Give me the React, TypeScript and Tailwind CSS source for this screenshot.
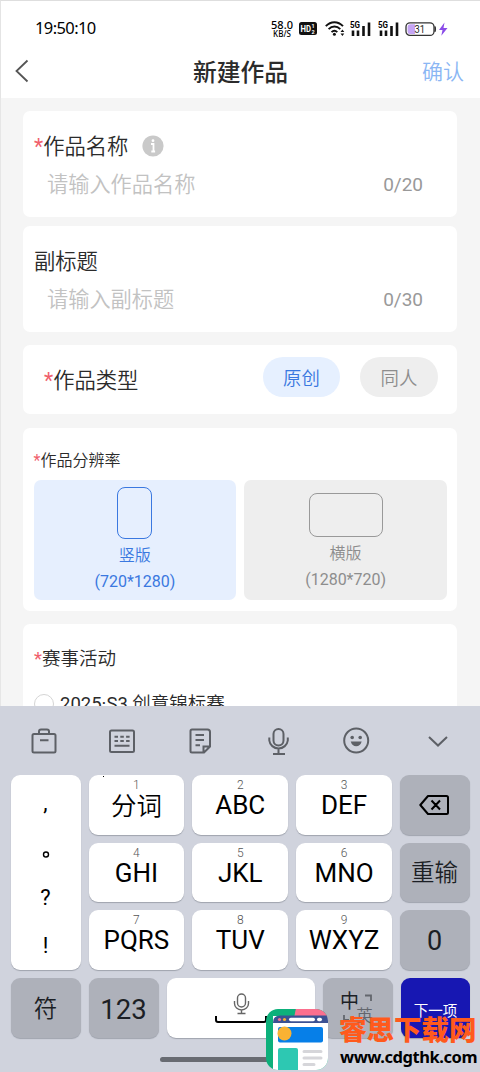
import React from 'react';

const letterKeys = [
  { num: '1', label: '分词' },
  { num: '2', label: 'ABC' },
  { num: '3', label: 'DEF' },
  { num: '4', label: 'GHI' },
  { num: '5', label: 'JKL' },
  { num: '6', label: 'MNO' },
  { num: '7', label: 'PQRS' },
  { num: '8', label: 'TUV' },
  { num: '9', label: 'WXYZ' },
];

const Signal: React.FC = () => (
  <svg width="22" height="18" viewBox="0 0 22 18" className="shrink-0">
    <text x="0" y="7.5" fontSize="8.5" fontWeight="700" fontFamily="Roboto, sans-serif" textLength="10" lengthAdjust="spacingAndGlyphs">5G</text>
    <path d="M3 10.5V16M8 10.5V16M13.5 6V16M19 2.5V16" stroke="#111" strokeWidth="2.6" />
  </svg>
);

const StatusBar: React.FC = () => (
  <div className="flex h-[46px] items-center pt-[9px] pl-[34px] text-black">
    <span className="w-[235px] font-['Noto_Sans',sans-serif] text-[16.5px] leading-none tracking-[-0.6px]">19:50:10</span>
    <div className="flex w-[24px] flex-col items-center font-['Noto_Sans',sans-serif] leading-none">
      <span className="text-[11px] leading-[10px] font-medium">58.0</span>
      <span className="text-[8px] leading-[8px] font-medium">KB/S</span>
    </div>
    <svg width="18" height="13" viewBox="0 0 18 13" className="ml-[5px] shrink-0">
      <rect width="18" height="13" rx="2.5" fill="#111" />
      <text x="1.5" y="10" fontSize="9.5" fontWeight="700" fill="#fff" fontFamily="Roboto, sans-serif" textLength="10.5" lengthAdjust="spacingAndGlyphs">HD</text>
      <text x="12.5" y="6" fontSize="5.5" fontWeight="700" fill="#fff" fontFamily="Roboto, sans-serif">1</text>
      <text x="12.5" y="11.5" fontSize="5.5" fontWeight="700" fill="#fff" fontFamily="Roboto, sans-serif">2</text>
    </svg>
    <svg width="20" height="17" viewBox="0 0 20 17" className="ml-[8px] shrink-0" fill="none" stroke="#111" strokeWidth="1.9">
      <path d="M.8 6.2C5.8 .9 13 .9 18 6.2" />
      <path d="M3.6 9.2c3.5-3.6 8.2-3.6 11.7 0" />
      <path d="M6.5 12.1c1.8-1.8 4-1.8 5.8 0" />
      <circle cx="9.4" cy="14.3" r="1.5" fill="#111" stroke="none" />
      <path d="M15.5 12l1.9-2.4 1.9 2.4zM15.5 13.6l1.9 2.4 1.9-2.4z" fill="#111" stroke="none" />
    </svg>
    <div className="ml-[5px] flex gap-[6px]">
      <Signal />
      <Signal />
    </div>
    <svg width="43" height="16" viewBox="0 0 43 16" className="ml-[5px] shrink-0">
      <rect x="1" y="1.8" width="28" height="12.6" rx="4" fill="#fff" stroke="#333" strokeWidth="1.3" />
      <path d="M5 3.2H10V13H5Q2.6 13 2.6 10.5V5.7Q2.6 3.2 5 3.2Z" fill="#c5a5f5" />
      <path d="M30 5.5Q31.3 8 30 10.7Z" fill="#333" stroke="#333" />
      <text x="9.5" y="11.8" fontSize="10.5" fill="#222" fontFamily="Roboto, sans-serif" textLength="10.5" lengthAdjust="spacingAndGlyphs">31</text>
      <path d="M39.500 1.500L34 9h3.500l-1.200 5.800L42.500 7h-4z" fill="#8a4be8" />
    </svg>
  </div>
);

const Star: React.FC = () => <span className="font-normal text-[#f0606c]">*</span>;

type FieldProps = { label: string; placeholder: string; count: string; required?: boolean };

const FieldCard: React.FC<FieldProps> = ({ label, placeholder, count, required }) => (
  <section className="h-[106px] rounded-[7px] bg-white pt-[22px] pl-[11px]">
    <div className="flex h-[28px] items-center text-[21.3px] text-[#2b2b2b]">
      {required && <Star />}
      {label}
      {required && (
        <svg width="22" height="22" viewBox="0 0 22 22" className="mt-[-2px] ml-[14px]">
          <circle cx="11" cy="11" r="10.6" fill="#c9c9c9" />
          <circle cx="11" cy="5.7" r="1.4" fill="#fff" />
          <path d="M9 9h2.5v7.5M9.300 16.500h3.800" stroke="#fff" strokeWidth="1.800" fill="none" />
        </svg>
      )}
    </div>
    <div className="mt-[10px] flex h-[28px] items-center justify-between pr-[34px] pl-[13px]">
      <span className="text-[21.2px] text-[#c2c2c2]">{placeholder}</span>
      <span className="text-[19px] font-normal text-[#999]">{count}</span>
    </div>
  </section>
);

const Toolbar: React.FC = () => (
  <div className="flex h-[69px] items-center pl-[30px] text-[#5d6066]">
    <svg width="28" height="28" viewBox="0 0 28 28" fill="none" stroke="currentColor" strokeWidth="2" className="shrink-0">
      <rect x="2.5" y="7" width="23" height="18.5" rx="1.5" />
      <path d="M9 7V4.500Q9 2.500 11 2.500h6Q19 2.500 19 4.500V7M10 13.300h8.500" />
    </svg>
    <svg width="28" height="28" viewBox="0 0 28 28" fill="none" stroke="currentColor" strokeWidth="2" className="ml-[50px] shrink-0">
      <rect x="2" y="3.500" width="24" height="21.500" rx="1.500" />
      <path d="M6.500 9.800h3.500m2.300 0h3.500m2.300 0h3.500M6.500 14h3.500m2.300 0h3.500m2.300 0h3.500M6.500 18.800h15" />
    </svg>
    <svg width="28" height="28" viewBox="0 0 28 28" fill="none" stroke="currentColor" strokeWidth="2" className="ml-[50px] shrink-0">
      <path d="M6 2.500h15.500Q24 2.500 24 5v14.500l-6 6H6Q4.500 25.500 4.500 24V4Q4.500 2.500 6 2.500ZM17.500 25v-5.500H24M9.500 8h8.500M9.500 13h8.500M9.500 18.200h4.500" />
    </svg>
    <svg width="28" height="28" viewBox="0 0 28 28" fill="none" stroke="currentColor" strokeWidth="2" className="ml-[51px] shrink-0">
      <rect x="8.500" y="2" width="10" height="16.500" rx="5" />
      <path d="M4.300 10.500v3a9.300 8.800 0 0 0 18.500 0v-3M13.500 22.300V27M8 27h12" />
    </svg>
    <svg width="28" height="28" viewBox="0 0 28 28" fill="none" stroke="currentColor" strokeWidth="2" className="ml-[49px] shrink-0">
      <circle cx="14.200" cy="13.500" r="12" />
      <circle cx="10.200" cy="10.500" r="1.800" fill="currentColor" stroke="none" />
      <circle cx="18.200" cy="10.500" r="1.800" fill="currentColor" stroke="none" />
      <path d="M8.700 14.500h11q-1.500 4.800-5.500 4.800t-5.500-4.800Z" fill="currentColor" stroke="none" />
    </svg>
    <svg width="28" height="28" viewBox="0 0 28 28" fill="none" stroke="currentColor" strokeWidth="2" className="ml-[54px] shrink-0">
      <path d="M5 10l9 8.500 9-8.500" />
    </svg>
  </div>
);

const Watermark: React.FC = () => (
  <div className="absolute top-[1008px] left-[265px] flex">
    <svg width="64" height="64" viewBox="0 0 64 64" className="shrink-0">
      <defs>
        <clipPath id="badge">
          <rect x="1" y="1" width="62" height="61" rx="12" />
        </clipPath>
      </defs>
      <g clipPath="url(#badge)">
        <rect width="64" height="64" fill="#0db07b" />
        <path d="M31 0h33v20H27Z" fill="#fb6f8e" />
        <rect x="8" y="8" width="56" height="56" fill="#fff" />
        <path d="M8 15q0-7.500 7-7.500h49V15Z" fill="#3b5193" />
        <circle cx="14.500" cy="11.500" r="1.600" fill="#fb6f8e" />
        <circle cx="19.500" cy="11.500" r="1.600" fill="#f9b233" />
        <rect x="24" y="9.700" width="26" height="3.600" rx="1.800" fill="#fff" />
        <rect x="52" y="9.700" width="5" height="3.600" rx="1.800" fill="#fff" />
        <rect x="13" y="19" width="45" height="15.500" rx="2" fill="#067fe8" />
        <circle cx="19.500" cy="25.500" r="7" fill="#f9b233" />
        <rect x="13" y="40" width="20" height="24" rx="2" fill="#2dc8b2" />
        <path d="M39 43.500h17M39 50h17M39 56.500h10" stroke="#d6d6da" strokeWidth="3" strokeLinecap="round" />
      </g>
    </svg>
    <div className="ml-[10px] whitespace-nowrap">
      <div className="mt-[6px] h-[33px] text-[27.500px] leading-[33px] font-black text-[#ff5a1c]">睿思下载网</div>
      <div className="pl-px font-['Noto_Sans',sans-serif] text-[16.500px] leading-[19px] font-bold tracking-[-0.450px] text-black">www.cdgthk.com</div>
    </div>
  </div>
);

const Keyboard: React.FC = () => (
  <div className="h-[366px] bg-[#d0d3dd] text-black">
    <Toolbar />
    <div className="flex h-[195px] gap-[8px] pl-[10.500px]">
      <div className="flex w-[70px] flex-col items-center rounded-[9px] bg-white text-[22px] shadow-[0_1px_1px_#9fa3ad]">
        <span className="h-[53px] pt-[11px]">,</span>
        <span className="mt-[12px] h-[30px]">
          <svg width="10" height="20" viewBox="0 0 10 20"><circle cx="5" cy="14.500" r="2.500" fill="none" stroke="#000" strokeWidth="1.400" /></svg>
        </span>
        <span className="mt-[11px] h-[34px] leading-[34px]">?</span>
        <span className="mt-[14px] h-[34px] leading-[34px]">!</span>
      </div>
      <div className="grid w-[303.500px] grid-cols-3 grid-rows-3 gap-x-[8px] gap-y-[8px]">
        {letterKeys.map(k => (
          <div key={k.num} className="flex flex-col items-center rounded-[9px] bg-white shadow-[0_1px_1px_#9fa3ad]">
            <span className="mt-[3px] h-[13px] text-[12px] leading-[14px] font-light text-[#555]">{k.num}</span>
            <span className={k.num === '1' ? 'pt-px text-[25.500px] leading-[28px] font-[350]' : 'text-[26px] leading-[28px]'}>{k.label}</span>
          </div>
        ))}
      </div>
      <div className="grid w-[70px] grid-rows-3 gap-y-[8px] text-[#1c1f25] *:flex *:items-center *:justify-center *:rounded-[9px] *:bg-[#aeb1ba] *:shadow-[0_1px_1px_#9fa3ad]">
        <div>
          <svg width="30" height="20" viewBox="0 0 30 20" fill="none" stroke="#000" strokeWidth="2" className="mr-[3px]">
            <path d="M9 1h18.500Q29 1 29 2.500v15Q29 19 27.500 19H9L1.300 10ZM12.500 5.500l8.500 9M21 5.500l-8.500 9" strokeLinejoin="round" />
          </svg>
        </div>
        <div className="pt-[3px] pr-px text-[23.500px] font-[350]">重输</div>
        <div className="pt-[3px] pr-px text-[27px]">0</div>
      </div>
    </div>
    <div className="mt-[8px] flex h-[60px] gap-[8px] pl-[10.500px] text-[#1c1f25]">
      <div className="flex w-[70px] items-center justify-center rounded-[9px] bg-[#aeb1ba] pt-[3px] text-[23.500px] font-[350] shadow-[0_1px_1px_#9fa3ad]">符</div>
      <div className="flex w-[70px] items-center justify-center rounded-[9px] bg-[#aeb1ba] pt-[3px] text-[27.500px] shadow-[0_1px_1px_#9fa3ad]">123</div>
      <div className="flex w-[148.500px] flex-col items-center rounded-[9px] bg-white pt-[14px] shadow-[0_1px_1px_#9fa3ad]">
        <svg width="54" height="34" viewBox="0 0 54 34" fill="none">
          <path d="M2 24v4q0 2 2 2h46q2 0 2-2v-4" stroke="#000" strokeWidth="2" />
          <rect x="23.500" y="2" width="8" height="13" rx="4" stroke="#666" strokeWidth="1.400" />
          <path d="M20.500 9v2.500a7 6.500 0 0 0 14 0V9M27.500 18v3.500M23.500 21.500h8" stroke="#666" strokeWidth="1.400" />
        </svg>
      </div>
      <div className="flex w-[70px] rounded-[9px] bg-[#aeb1ba] pl-[17px] shadow-[0_1px_1px_#9fa3ad]">
        <div className="w-[20px]">
          <div className="mt-[12px] text-[19px] leading-[24px] font-normal">中</div>
          <svg width="8" height="8" viewBox="0 0 8 8" className="ml-[2px] text-[#63666d]"><path d="M2 1v5h5" stroke="currentColor" strokeWidth="1.800" fill="none" /></svg>
        </div>
        <div className="flex flex-col text-[#63666d]">
          <svg width="14" height="9" viewBox="0 0 14 9" className="mt-[16px]"><path d="M5 1.500h6V7" stroke="currentColor" strokeWidth="1.800" fill="none" /></svg>
          <span className="-ml-[4px] text-[17px] leading-[26px] font-[350]">英</span>
        </div>
      </div>
      <div className="flex w-[69px] items-center justify-center rounded-[9px] bg-[#1717b2] pt-[7px] text-[14.500px] text-white shadow-[0_1px_1px_#9fa3ad]">下一项</div>
    </div>
    <div className="mx-auto mt-[19px] h-[5px] w-[160px] rounded-full bg-[#686b72]" />
  </div>
);

const App: React.FC = () => {
  return (
    <div className="relative flex h-[1072px] w-[480px] flex-col overflow-hidden bg-[#f5f5f5] font-['Roboto','Noto_Sans_CJK_SC',sans-serif]">
      <header className="h-[98px] shrink-0 border-t border-l border-t-[#dedede] border-l-[#e4e4e4] bg-white">
        <StatusBar />
        <div className="flex h-[50px] items-center justify-between pr-[16px] pl-[13px]">
          <svg width="54" height="24" viewBox="0 0 54 24" fill="none" stroke="#555" strokeWidth="1.800" className="mt-[-3px]">
            <path d="M13.500 1.500L2.500 12l11 10.500" />
          </svg>
          <h1 className="pt-[3px] pr-[9px] text-[23.800px] font-medium text-[#2b2b2b]">新建作品</h1>
          <span className="pt-[2px] text-[21px] font-[350] text-[#8ab6f4]">确认</span>
        </div>
      </header>

      <main className="h-[608px] shrink-0 overflow-hidden border-l border-[#e6e6e6] pt-[13px] pr-[23px] pl-[22px] font-[350]">
        <FieldCard label="作品名称" placeholder="请输入作品名称" count="0/20" required />
        <div className="h-[9px]" />
        <FieldCard label="副标题" placeholder="请输入副标题" count="0/30" />

        <section className="mt-[13px] flex h-[69px] items-start rounded-[7px] bg-white pt-[12px] pr-[19px] pl-[21px]">
          <span className="mr-auto pt-[10px] text-[21.300px] leading-[28px] text-[#2b2b2b]"><Star />作品类型</span>
          <button className="h-[40px] w-[77px] rounded-full bg-[#e6f0ff] pt-[3px] text-[18.400px] text-[#3a78e0]">原创</button>
          <button className="ml-[20px] h-[40px] w-[78px] rounded-full bg-[#eee] pt-[3px] text-[18.400px] text-[#8d8d8d]">同人</button>
        </section>

        <section className="mt-[14px] h-[183px] rounded-[7px] bg-white pt-[21px] pr-[10px] pl-[10.500px]">
          <div className="h-[31px] text-[16px] leading-[24px] text-[#2b2b2b]"><Star />作品分辨率</div>
          <div className="grid h-[120px] grid-cols-2 gap-[8px] text-center text-[16px]">
            <div className="flex flex-col items-center rounded-[7px] bg-[#e6effe] pt-[7px] text-[#3a78e0]">
              <div className="h-[52px] w-[35px] rounded-[8px] border-[1.500px] border-[#3a78e0]" />
              <div className="mt-[4px] leading-[26px]">竖版</div>
              <div className="leading-[26px] font-normal">(720*1280)</div>
            </div>
            <div className="flex flex-col items-center rounded-[7px] bg-[#eee] pt-[13px] text-[#8d8d8d]">
              <div className="h-[44px] w-[74px] rounded-[8px] border border-[#999]" />
              <div className="mt-[4px] leading-[26px]">横版</div>
              <div className="leading-[26px] font-normal">(1280*720)</div>
            </div>
          </div>
        </section>

        <section className="mt-[13px] h-[140px] rounded-[7px] bg-white pt-[23px] pl-[11px] text-[18.500px] text-[#2b2b2b]">
          <div className="leading-[24px]"><Star />赛事活动</div>
          <label className="mt-[21px] flex items-center gap-[6px]">
            <span className="h-[20px] w-[20px] rounded-full border border-[#d5d5d5]" />
            <span className="leading-[24px]"><span className="font-normal">2025·S3</span> 创意锦标赛</span>
          </label>
        </section>
      </main>

      <Keyboard />
      <span className="absolute top-[776px] left-[103px] h-px w-px bg-black" />
      <Watermark />
    </div>
  );
};

export default App;
